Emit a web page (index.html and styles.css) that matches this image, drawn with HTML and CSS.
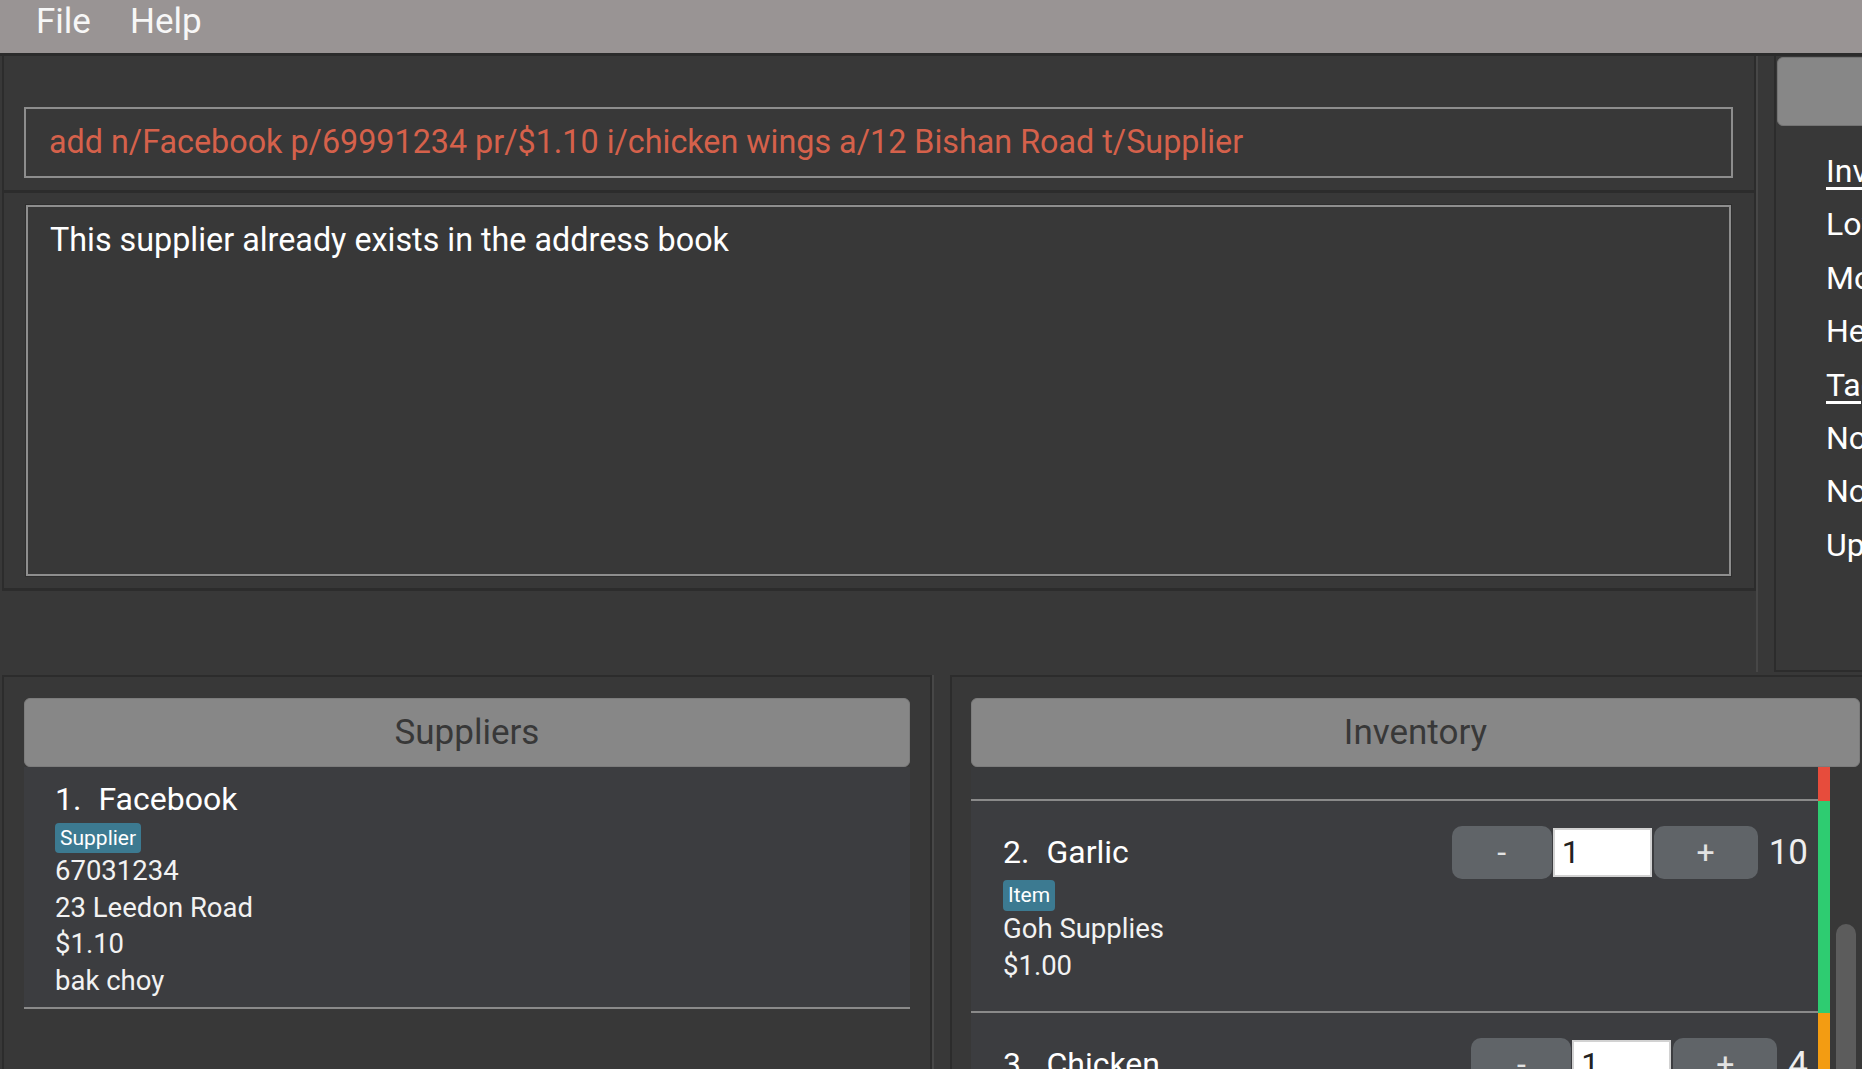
FILE: index.html
```html
<!DOCTYPE html>
<html>
<head>
<meta charset="utf-8">
<link rel="stylesheet" href="styles.css">
</head>
<body>
<div class="menubar">
  <span class="menu-item">File</span>
  <span class="menu-item">Help</span>
</div>
<div class="top">
  <div class="left-col">
    <div class="cmd-panel">
      <div class="cmd-field">add n/Facebook p/69991234 pr/$1.10 i/chicken wings a/12 Bishan Road t/Supplier</div>
    </div>
    <div class="result-panel">
      <div class="result-box">This supplier already exists in the address book</div>
    </div>
  </div>
  <div class="split-divider"></div>
  <div class="right-panel">
    <div class="right-btn"></div>
    <div class="legend">
      <div class="legend-title">Inventory Status</div>
      <div class="legend-row">Low</div>
      <div class="legend-row">Moderate</div>
      <div class="legend-row">Healthy</div>
      <div class="legend-title">Tags</div>
      <div class="legend-row">None</div>
      <div class="legend-row">None</div>
      <div class="legend-row">Update</div>
    </div>
  </div>
</div>
<div class="bottom">
  <div class="sup-panel">
    <div class="list-header">Suppliers</div>
    <div class="sup-card">
      <div class="card-name"><span class="idx">1.</span>Facebook</div>
      <div class="tags"><span class="tag">Supplier</span></div>
      <div class="detail">67031234</div>
      <div class="detail">23 Leedon Road</div>
      <div class="detail">$1.10</div>
      <div class="detail">bak choy</div>
    </div>
  </div>
  <div class="panel-gap"></div>
  <div class="inv-panel">
    <div class="list-header inv-header">Inventory</div>
    <div class="inv-list">
      <div class="inv-body">
        <div class="inv-item partial">
          <div class="inv-content"></div>
          <div class="stock-bar bar-low"></div>
        </div>
        <div class="inv-item">
          <div class="inv-content">
            <div class="inv-row">
              <div class="card-name"><span class="idx">2.</span>Garlic</div>
              <div class="spinner">
                <div class="spin-btn minus">-</div>
                <div class="spin-input">1</div>
                <div class="spin-btn plus">+</div>
                <div class="count">10</div>
              </div>
            </div>
            <div class="tags tight"><span class="tag">Item</span></div>
            <div class="detail">Goh Supplies</div>
            <div class="detail">$1.00</div>
          </div>
          <div class="stock-bar bar-ok"></div>
        </div>
        <div class="inv-item">
          <div class="inv-content">
            <div class="inv-row">
              <div class="card-name"><span class="idx">3.</span>Chicken</div>
              <div class="spinner">
                <div class="spin-btn minus">-</div>
                <div class="spin-input">1</div>
                <div class="spin-btn plus">+</div>
                <div class="count">4</div>
              </div>
            </div>
            <div class="tags tight"><span class="tag">Item</span></div>
            <div class="detail">Tan Poultry</div>
            <div class="detail">$3.50</div>
          </div>
          <div class="stock-bar bar-mid"></div>
        </div>
      </div>
      <div class="scrollbar"><div class="thumb"></div></div>
    </div>
  </div>
</div>
</body>
</html>
```

FILE: styles.css
```css
* { box-sizing: border-box; }
html, body { margin: 0; padding: 0; }
body {
  width: 1862px;
  height: 1069px;
  overflow: hidden;
  background: #383838;
  font-family: Roboto, "Liberation Sans", sans-serif;
  color: #ffffff;
}

/* menu */
.menubar {
  height: 56px;
  background: #999494;
  border-bottom: 3px solid #2b2b2b;
  display: flex;
  gap: 39px;
  padding-left: 36px;
}
.menu-item {
  font-size: 35px;
  line-height: 43px;
  color: #f7f7f7;
}

/* top area */
.top {
  display: flex;
  height: 616px;
  padding-left: 2px;
}
.left-col {
  width: 1754px;
  display: flex;
  flex-direction: column;
}
.cmd-panel {
  height: 137px;
  padding: 51px 21px 12px 20px;
  border-left: 2px solid #2c2c2c;
  border-right: 2px solid #2c2c2c;
  border-bottom: 3px solid #2c2c2c;
}
.cmd-field {
  height: 71px;
  border: 2px solid #8d8d8d;
  padding-left: 23px;
  font-size: 32.3px;
  line-height: 67px;
  color: #d5614b;
  white-space: nowrap;
}
.result-panel {
  height: 398px;
  padding: 12px 23px 13px 22px;
  border-left: 2px solid #2c2c2c;
  border-right: 2px solid #2c2c2c;
  border-bottom: 3px solid #2c2c2c;
}
.result-box {
  height: 371px;
  border: 2px solid #8e8e8e;
  box-shadow: 0 0 0 1px #2e2e2e;
  padding: 13px 22px;
  font-size: 32.3px;
  line-height: 40px;
  color: #ffffff;
}
.split-divider {
  width: 2px;
  margin-right: 16px;
  background: #474747;
}
.right-panel {
  flex: 1;
  border: 2px solid #2c2c2c;
  border-right: none;
  border-top: none;
  padding-top: 1px;
  overflow: hidden;
}
.right-btn {
  margin-left: 1px;
  height: 69px;
  width: 200px;
  background: #878787;
  border: 1px solid #747474;
  border-radius: 6px;
}
.legend {
  margin-top: 19px;
  padding-left: 50px;
  font-size: 32px;
  line-height: 53.4px;
  white-space: nowrap;
  color: #ffffff;
}
.legend-title { text-decoration: underline; text-underline-offset: 5px; }

/* bottom area */
.bottom {
  display: flex;
  height: 397px;
  padding-top: 3px;
}
.sup-panel {
  margin-left: 2px;
  width: 930px;
  border: 2px solid #2c2c2c;
  border-bottom: none;
  padding: 21px 20px 0 20px;
}
.panel-gap {
  width: 2px;
  margin-right: 16px;
  background: #474747;
}
.inv-panel {
  width: 912px;
  border-left: 2px solid #2c2c2c;
  border-top: 2px solid #2c2c2c;
  padding: 21px 0 0 19px;
}
.list-header {
  height: 69px;
  background: #878787;
  border: 1px solid #7c7c7c;
  border-radius: 6px;
  font-size: 35px;
  line-height: 67px;
  text-align: center;
  color: #383838;
}
.inv-header { margin-right: 2px; }

.sup-card {
  height: 242px;
  background: #3c3d40;
  border-bottom: 2px solid #8a8a8a;
  padding: 14px 0 0 31px;
}
.card-name {
  font-size: 32px;
  line-height: 36px;
  color: #ffffff;
}
.idx { margin-right: 17px; }
.tags { margin-top: 6px; height: 30px; }
.tags.tight { margin-top: 1px; height: 31px; }
.tag {
  display: inline-block;
  height: 100%;
  padding: 0 5px;
  background: #3c7a91;
  border-radius: 4px;
  font-size: 21px;
  line-height: 30px;
  color: #ffffff;
}
.detail {
  font-size: 27.5px;
  line-height: 36.5px;
  color: #f2f2f2;
}

/* inventory list */
.inv-list {
  display: flex;
  height: 320px;
  overflow: hidden;
}
.inv-body { width: 859px; }
.inv-item { display: flex; }
.inv-content {
  flex: 1;
  background: #3c3d40;
  border-bottom: 2px solid #8a8a8a;
  padding: 25px 10px 27px 32px;
}
.inv-item.partial .inv-content {
  height: 34px;
  padding: 0;
  background: #393a3c;
}
.stock-bar { width: 12px; }
.bar-low { background: #e74c3c; }
.bar-ok { background: #2ecc71; }
.bar-mid { background: #f39c12; }
.inv-row {
  display: flex;
  align-items: center;
  justify-content: space-between;
  height: 53px;
}
.inv-row .card-name { line-height: 53px; }
.spinner {
  display: flex;
  align-items: center;
}
.spin-btn {
  height: 53px;
  background: #606468;
  border-radius: 10px;
  color: #e2e2e2;
  font-size: 32px;
  line-height: 53px;
  text-align: center;
}
.spin-btn.minus { width: 100px; }
.spin-btn.plus { width: 104px; margin-left: 2px; }
.spin-input {
  width: 99px;
  height: 49px;
  margin-left: 1px;
  background: #ffffff;
  border: 2px solid #d2d2d2;
  padding-left: 7px;
  font-size: 32px;
  line-height: 45px;
  color: #222222;
}
.count {
  margin-left: 11px;
  font-size: 35px;
  line-height: 53px;
  color: #eeeeee;
}
.scrollbar {
  margin-left: 6px;
  width: 20px;
}
.thumb {
  margin-top: 157px;
  height: 300px;
  background: #5c5c5c;
  border-radius: 10px;
}
```
